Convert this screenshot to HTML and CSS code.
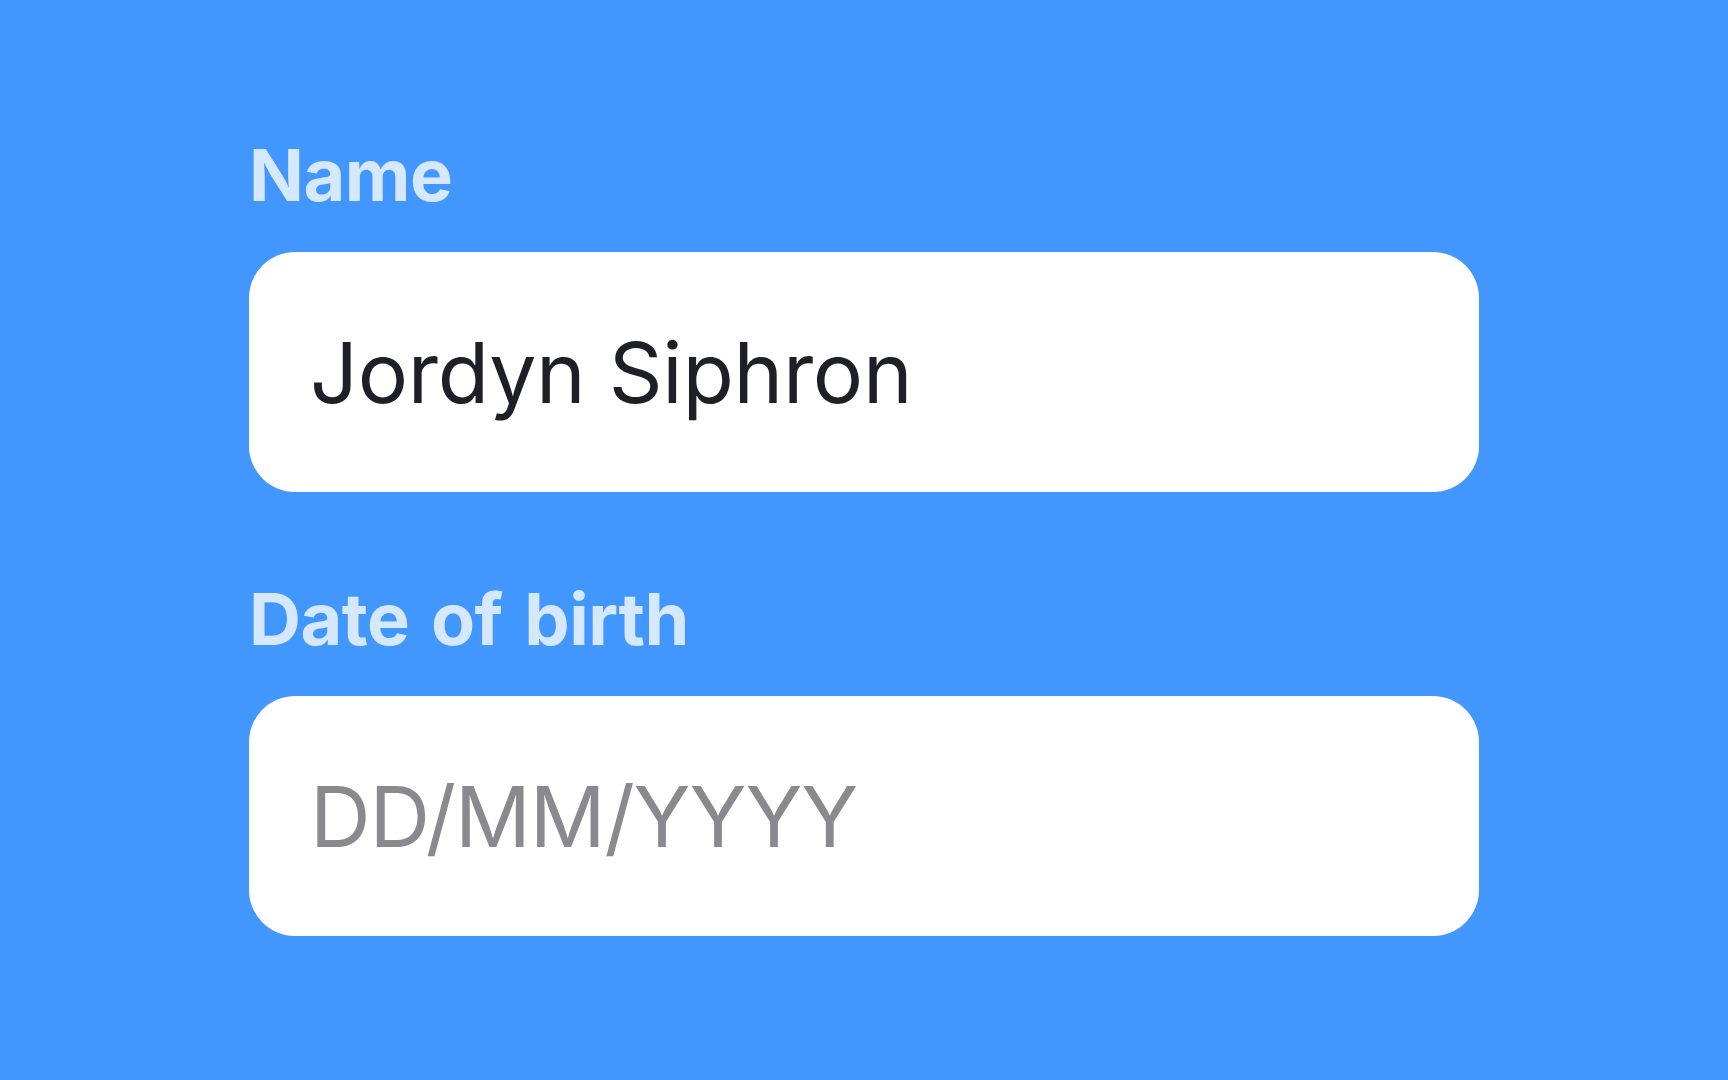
FILE: index.html
```html
<!DOCTYPE html>
<html lang="en">
<head>
    <meta charset="UTF-8">
    <meta name="viewport" content="width=device-width, initial-scale=1.0">
    <title>Profile Form</title>
    <link rel="stylesheet" href="styles.css">
</head>
<body>

    <form class="form">
        <div class="field">
            <label class="label" for="name">Name</label>
            <input class="input" id="name" type="text" value="Jordyn Siphron">
        </div>
        <div class="field">
            <label class="label" for="dob">Date of birth</label>
            <input class="input" id="dob" type="text" placeholder="DD/MM/YYYY">
        </div>
    </form>

</body>
</html>
```

FILE: styles.css
```css
body {
    font-family: Inter, "Noto Sans", sans-serif;
    margin: 0;
    padding: 0;
    background-color: #4197fe;
    height: 1080px;
    overflow: hidden;
}
.form {
    display: flex;
    flex-direction: column;
    gap: 91px;
    padding: 139px 0 0 249px;
}
.field {
    display: flex;
    flex-direction: column;
    gap: 41px;
}
.label {
    font-size: 72px;
    line-height: 72px;
    font-weight: 700;
    letter-spacing: -0.5px;
    word-spacing: 5px;
    color: #d6e8fe;
}
.input {
    box-sizing: border-box;
    width: 1230px;
    height: 240px;
    padding: 0 60px 0 61px;
    border: none;
    border-radius: 46px;
    background-color: white;
    font-family: Inter, "Noto Sans", sans-serif;
    font-size: 84px;
    letter-spacing: -0.3px;
    color: #1f1f27;
    outline: none;
}
.input::placeholder {
    color: #8a8a8e;
    letter-spacing: -1.1px;
}
```
